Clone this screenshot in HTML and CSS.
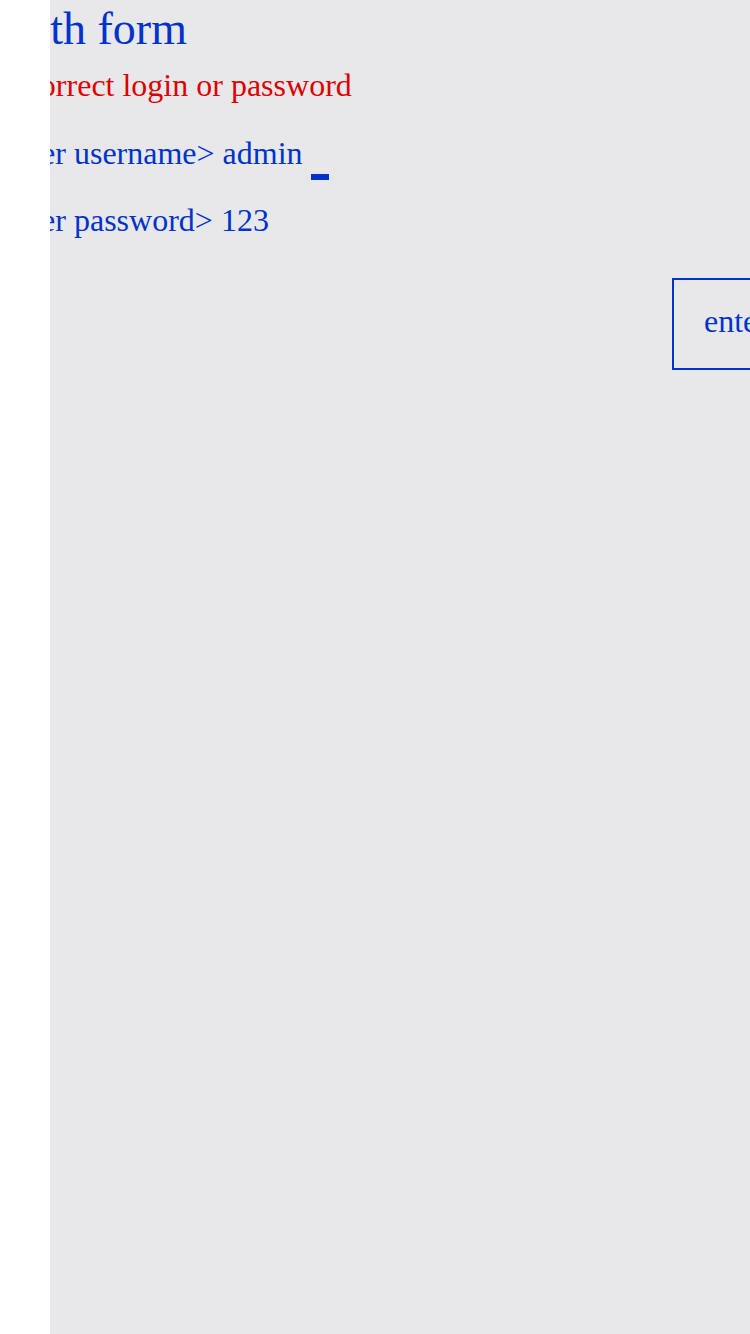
FILE: index.html
```html
<!DOCTYPE html>
<html lang="en">
<head>
<meta charset="utf-8">
<title>Auth form</title>
<link rel="stylesheet" href="styles.css">
</head>
<body>
<div class="screen">
  <div class="content">
    <h2 class="title">Auth form</h2>
    <p class="error">Incorrect login or password</p>
    <p class="row">enter username&gt; admin <span class="cursor"></span></p>
    <p class="row row-next">enter password&gt; 123</p>
    <div class="actions">
      <button class="btn" type="button">enter</button>
    </div>
  </div>
</div>
</body>
</html>
```
FILE: styles.css
```css
html, body {
  margin: 0;
  padding: 0;
  background: #ffffff;
}
.screen {
  margin-left: 50px;
  height: 1334px;
  background: #e8e8ea;
  overflow: hidden;
}
.content {
  margin-left: -56px;
  width: 900px;
  font-family: "Liberation Serif", "Times New Roman", serif;
  color: #0033cc;
}
.title {
  margin: 0;
  font-size: 46px;
  font-weight: normal;
  line-height: 57px;
}
.error {
  margin: 8px 0 0;
  padding-left: 5px;
  font-size: 32px;
  line-height: 40px;
  color: #dd0000;
}
.row {
  margin: 28px 0 0;
  padding-left: 8px;
  font-size: 32px;
  line-height: 40px;
  height: 40px;
  white-space: nowrap;
}
.row-next {
  margin-top: 27px;
}
.cursor {
  display: inline-block;
  width: 18px;
  height: 6px;
  background: #0033cc;
  vertical-align: -16px;
}
.actions {
  margin-top: 38px;
  padding-left: 678px;
}
.btn {
  font-family: "Liberation Serif", "Times New Roman", serif;
  font-size: 32px;
  line-height: 40px;
  color: #0033cc;
  background: transparent;
  border: 2px solid #0033cc;
  border-radius: 0;
  padding: 21px 30px 27px;
  margin: 0;
}
```
